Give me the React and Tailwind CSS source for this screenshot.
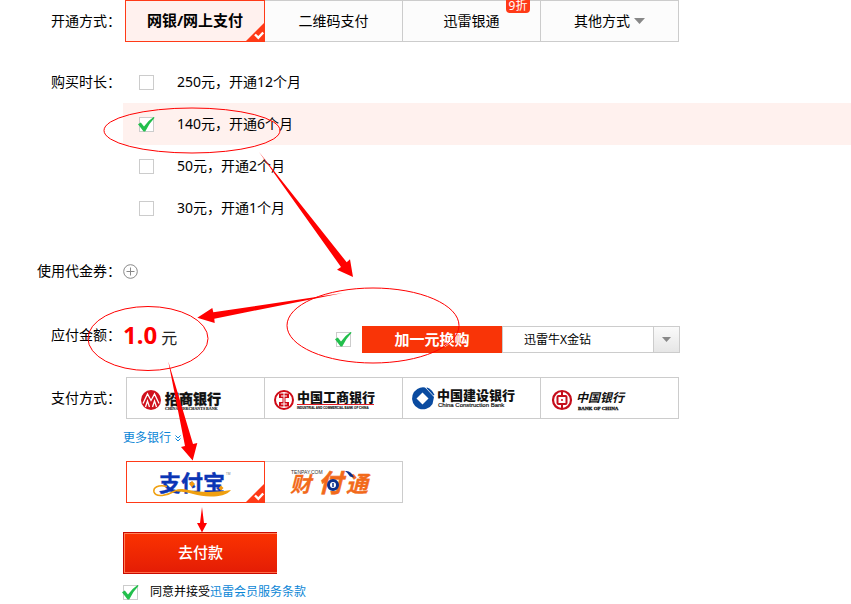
import React from 'react';

const SANS = "font-['Noto_Sans','Noto_Sans_CJK_SC',sans-serif]";

function Tick({ className, color }) {
  return (
    <svg viewBox="0 0 17 15" className={className} aria-hidden="true">
      <path d="M0 7.2 L2.8 5.6 L6 9.6 Q10 3.6 15.6 0 L16.6 0.8 Q11 6.6 7.2 14.4 L5.6 14.6 Z" fill={color} />
    </svg>
  );
}

function Checkbox({ id, checked, label }) {
  return (
    <span className="relative block size-[15px] shrink-0">
      <input
        id={id}
        type="checkbox"
        defaultChecked={checked}
        aria-label={label}
        className="peer block size-[15px] appearance-none border border-[#ccc] bg-white"
      />
      <Tick
        color="#22bf4c"
        className="pointer-events-none absolute -left-px top-0 hidden h-[15px] w-[17px] peer-checked:block"
      />
    </span>
  );
}

function Corner() {
  return (
    <svg viewBox="0 0 20 20" className="absolute -bottom-px -right-px size-5" aria-hidden="true">
      <path d="M20 0 V20 H0 Z" fill="#ff3a17" />
      <path d="M10 12.5 L13.3 15.7 L18.2 10.5" fill="none" stroke="#fff" strokeWidth="2.4" />
    </svg>
  );
}

function Row({ label, className = '', children }) {
  return (
    <div className={`flex ${className}`}>
      <div className="h-[42px] w-[123px] shrink-0 pr-0.5 text-right leading-[42px]">{label}</div>
      <div className="min-w-0 flex-1">{children}</div>
    </div>
  );
}

function MerchantsBank() {
  return (
    <svg width="137" height="40" viewBox="0 0 137 40" role="img" aria-label="招商银行">
      <circle cx="24" cy="22" r="10" fill="#d0101c" />
      <path d="M16 25.500 L20.500 16 L24 22.500 L27.500 16 L32 25.500 M18.500 29 L20.500 23 L22.500 29 M25.500 29 L27.500 23 L29.500 29" fill="none" stroke="#fff" strokeWidth="1.3" />
      <text x="38" y="26" fontSize="14" fontWeight="900" fill="#111" stroke="#111" strokeWidth="0.3">招商银行</text>
      <text x="38" y="32" fontSize="4" fontWeight="700" fill="#111" stroke="#111" strokeWidth="0.1" fontFamily="Liberation Serif, serif">CHINA MERCHANTS BANK</text>
    </svg>
  );
}

function IndustrialBank() {
  return (
    <svg width="137" height="40" viewBox="0 0 137 40" role="img" aria-label="中国工商银行">
      <circle cx="19" cy="22" r="9" fill="none" stroke="#cf0a16" strokeWidth="2" />
      <path d="M14 15.500 H24 V20 H20.500 V24 H24 V28.500 H14 V24 H17.500 V20 H14 Z" fill="#cf0a16" />
      <path d="M19 14.500 V29.500 M16 18 H22 M16 26 H22" stroke="#fff" strokeWidth="1" />
      <text x="32" y="24" fontSize="13" fontWeight="900" fill="#111">中国工商银行</text>
      <path d="M32 26.500 H109" stroke="#e01f26" />
      <text x="32" y="31" fontSize="3" fontWeight="700" fill="#111" stroke="#111" strokeWidth="0.1" fontFamily="Liberation Sans, sans-serif">INDUSTRIAL AND COMMERCIAL BANK OF CHINA</text>
    </svg>
  );
}

function ConstructionBank() {
  return (
    <svg width="137" height="40" viewBox="0 0 137 40" role="img" aria-label="中国建设银行">
      <path d="M22 9.500 A11 11 0 1 0 29.500 26 L31 19 Z" fill="#0a4ba0" />
      <path d="M24 9.500 Q29 11 31.500 17 L29 18 L22 11 Z" fill="#0a4ba0" />
      <path d="M23 10 L30.500 18" stroke="#fff" strokeWidth="0.8" />
      <path d="M19.500 14.500 L25.500 20.500 L19.500 26.500 L13.500 20.500 Z" fill="#fff" />
      <text x="34" y="22" fontSize="13" fontWeight="900" fill="#111">中国建设银行</text>
      <text x="35" y="29" fontSize="6" fill="#111" stroke="#111" strokeWidth="0.2" fontFamily="Liberation Sans, sans-serif">China Construction Bank</text>
    </svg>
  );
}

function BankOfChina() {
  return (
    <svg width="137" height="40" viewBox="0 0 137 40" role="img" aria-label="中国银行">
      <circle cx="21" cy="22" r="9" fill="none" stroke="#c50d1b" strokeWidth="2.2" />
      <path d="M21 13 V17.500 M21 26.500 V31" stroke="#c50d1b" strokeWidth="2" />
      <rect x="16.500" y="18" width="9" height="8" rx="1" fill="none" stroke="#c50d1b" strokeWidth="2" />
      <path d="M21 21 V23" stroke="#c50d1b" strokeWidth="1.5" />
      <text x="35" y="24" fontSize="12" fontWeight="700" fontStyle="italic" fill="#111">中国银行</text>
      <text x="37" y="32" fontSize="5" fontWeight="700" fill="#111" stroke="#111" strokeWidth="0.3" fontFamily="Liberation Serif, serif">BANK OF CHINA</text>
    </svg>
  );
}

function Alipay() {
  return (
    <svg width="137" height="40" viewBox="0 0 137 40" role="img" aria-label="支付宝">
      <text x="32" y="29" fontSize="22" fontWeight="700" fill="#0b35b5" stroke="#0b35b5" strokeWidth="0.4">支付宝</text>
      <path d="M40 24.500 C31 22 26 26 27 30 C29 36 40 33.500 48 29 C54 26.500 58 28 66 30" fill="none" stroke="#f0a010" strokeWidth="1.6" />
      <path d="M50 28 C62 26.500 70 33 104 28 C100 33 92 34.500 84 34.500 C70 34.500 62 29.500 50 29.500 Z" fill="#f0a010" />
      <path d="M65 19 l3 3 l-3 3 l-3 -3 Z M94 23.500 l2.500 2.500 l-2.500 2.500 l-2.500 -2.500 Z" fill="#f59a0c" />
      <text x="99" y="13" fontSize="3" fill="#777">TM</text>
    </svg>
  );
}

function Tenpay() {
  return (
    <svg width="137" height="40" viewBox="0 0 137 40" role="img" aria-label="财付通">
      <g fill="#f26a1b" stroke="#f26a1b" fontWeight="700" fontStyle="italic">
        <text x="25" y="30" fontSize="21" strokeWidth="0.2">财</text>
        <text x="53" y="30" fontSize="25" strokeWidth="0.6">付</text>
        <text x="81" y="30" fontSize="22" strokeWidth="0.4">通</text>
      </g>
      <circle cx="68" cy="23" r="4.5" fill="#fff" stroke="#0c2f8a" strokeWidth="3" />
      <path d="M68 21 V25" stroke="#0c2f8a" strokeWidth="1.5" />
      <path d="M80 9 Q86 8 89 15.500 L85 14.500 Q83 11 80 9 Z" fill="#0c2f8a" />
      <text x="26" y="12" fontSize="5" fill="#333" fontFamily="Liberation Sans, sans-serif">TENPAY.COM</text>
    </svg>
  );
}

const durations = [
  { id: 'm12', text: '250元，开通12个月' },
  { id: 'm6', text: '140元，开通6个月', checked: true },
  { id: 'm2', text: '50元，开通2个月' },
  { id: 'm1', text: '30元，开通1个月' },
];

const banks = [
  { name: '招商银行', Logo: MerchantsBank },
  { name: '中国工商银行', Logo: IndustrialBank },
  { name: '中国建设银行', Logo: ConstructionBank },
  { name: '中国银行', Logo: BankOfChina },
];

function Annotations() {
  return (
    <svg width="480" height="604" viewBox="0 0 480 604" className="pointer-events-none absolute left-0 top-0" aria-hidden="true">
      <g fill="none" stroke="#f00" strokeWidth="1">
        <ellipse cx="192" cy="130.500" rx="88" ry="22.500" />
        <ellipse cx="148" cy="338.500" rx="60" ry="32" />
        <ellipse cx="373" cy="325.500" rx="86" ry="37.500" />
      </g>
      <g fill="#f00">
        <path d="M259 152 L346.700 262.300 L350 259.300 L353 277 L337 269.700 L341 267 Z" />
        <path d="M343 293 L213.300 312.300 L212.300 308 L197.300 317.700 L214.700 323 L214.300 318.700 Z" />
        <path d="M168.300 361.500 L193 444 L197.300 443 L192.700 460.500 L181 447 L185 446 Z" />
        <path d="M202 507 L204 523 H207 L202 532.500 L197 523 H200 Z" />
      </g>
    </svg>
  );
}

export default function App() {
  return (
    <main className={`relative overflow-hidden bg-white text-sm text-black ${SANS}`}>
      <Row label="开通方式：">
        <div className="pl-0.5">
          <div className="flex h-[42px] w-full max-w-[554px]">
            <button type="button" className="relative w-[140px] border border-[#ff3a17] bg-[#fff1ee] text-[15px] font-bold">
              网银/网上支付
              <Corner />
            </button>
            <button type="button" className="flex-1 border-y border-r border-[#ccc] bg-[#fcfcfc]">二维码支付</button>
            <button type="button" className="relative flex-1 border-y border-r border-[#ccc] bg-[#fcfcfc]">
              迅雷银通
              <span className="absolute right-2.5 -top-px h-[13px] w-6 rounded-b-sm bg-[#ff3a17] text-center text-xs leading-3 text-white">9折</span>
            </button>
            <button type="button" className="flex flex-1 items-center justify-center gap-1 border-y border-r border-[#ccc] bg-[#fcfcfc]">
              其他方式
              <svg width="11" height="6" viewBox="0 0 11 6" aria-hidden="true"><path d="M0 0 H11 L5.500 6 Z" fill="#888" /></svg>
            </button>
          </div>
        </div>
      </Row>

      <Row label="购买时长：" className="mt-[19px]">
        {durations.map((d) => (
          <label key={d.id} htmlFor={d.id} className="flex h-[42px] items-center gap-[23px] pl-4 has-checked:bg-[#fff1ee]">
            <Checkbox id={d.id} checked={d.checked} />
            <span>{d.text}</span>
          </label>
        ))}
      </Row>

      <Row label="使用代金券：" className="mt-[21px]">
        <div className="flex h-[42px] items-center">
          <button type="button" aria-label="使用代金券">
            <svg width="15" height="15" viewBox="0 0 15 15" className="block" aria-hidden="true">
              <circle cx="7.500" cy="7.500" r="6.800" fill="none" stroke="#888" />
              <path d="M7.500 3.500 V11.500 M3.500 7.500 H11.500" stroke="#888" />
            </svg>
          </button>
        </div>
      </Row>

      <Row label="应付金额：" className="mt-[22px]">
        <div className="flex h-[42px] w-full max-w-[557px] justify-between">
          <div className="flex items-baseline gap-1 leading-[42px]">
            <strong className="text-2xl leading-[42px] text-[#f00]">1.0</strong>
            <span className="text-base leading-[42px] text-[#222]">元</span>
          </div>
          <div className="flex items-center self-end pb-[3px]">
            <Checkbox label="加一元换购" checked />
            <div className="ml-[11px] h-[27px] w-[140px] bg-[#f93407] text-center text-[15px] font-bold leading-[27px] text-white">加一元换购</div>
            <div className="flex h-[27px] w-[178px] border border-[#ccc]">
              <select aria-label="换购商品" className="min-w-0 flex-1 appearance-none bg-white pl-[21px] text-xs">
                <option>迅雷牛X金钻</option>
              </select>
              <span className="flex w-[26px] items-center justify-center border-l border-[#ccc] bg-linear-to-b from-[#fafafa] to-[#e6e6e6]">
                <svg width="9" height="5" viewBox="0 0 9 5" aria-hidden="true"><path d="M0 0 H9 L4.500 5 Z" fill="#888" /></svg>
              </span>
            </div>
          </div>
        </div>
      </Row>

      <Row label="支付方式：" className="mt-[21px]">
        <div className="pl-[3px]">
          <div className="grid h-[42px] w-full max-w-[553px] grid-cols-4 border border-r-0 border-[#ccc]">
            {banks.map(({ name, Logo }) => (
              <button key={name} type="button" className="overflow-hidden border-r border-[#ccc]">
                <Logo />
              </button>
            ))}
          </div>
        </div>
        <a href="#banks" className="mt-[9px] flex h-5 w-max items-center gap-1 text-xs text-[#0b86d6]">
          更多银行
          <svg width="6" height="7" viewBox="0 0 6 7" fill="none" stroke="#0b86d6" aria-hidden="true">
            <path d="M0.500 0.500 L3 3 L5.500 0.500 M0.500 3.500 L3 6 L5.500 3.500" />
          </svg>
        </a>
        <div className="mt-[13px] flex h-[42px] pl-[3px]">
          <button type="button" className="relative w-[139px] border border-[#ff3a17]">
            <Alipay />
            <Corner />
          </button>
          <button type="button" className="w-[138px] border-y border-r border-[#ccc]">
            <Tenpay />
          </button>
        </div>
        <button
          type="button"
          className="mt-[29px] block h-[42px] w-[154px] border border-r-0 border-[#c80a00] bg-linear-to-b from-[#fb3200] to-[#e41c05] text-[15px] font-medium text-white shadow-[inset_1px_1px_0_#ff8058,inset_0_-1px_0_#ff6a48]"
        >
          去付款
        </button>
        <div className="mt-2 flex h-5 items-center gap-3 text-xs">
          <Checkbox id="agree" checked />
          <span>
            <label htmlFor="agree">同意并接受</label>
            <a href="#terms" className="text-[#0b86d6]">迅雷会员服务条款</a>
          </span>
        </div>
      </Row>

      <Annotations />
    </main>
  );
}
